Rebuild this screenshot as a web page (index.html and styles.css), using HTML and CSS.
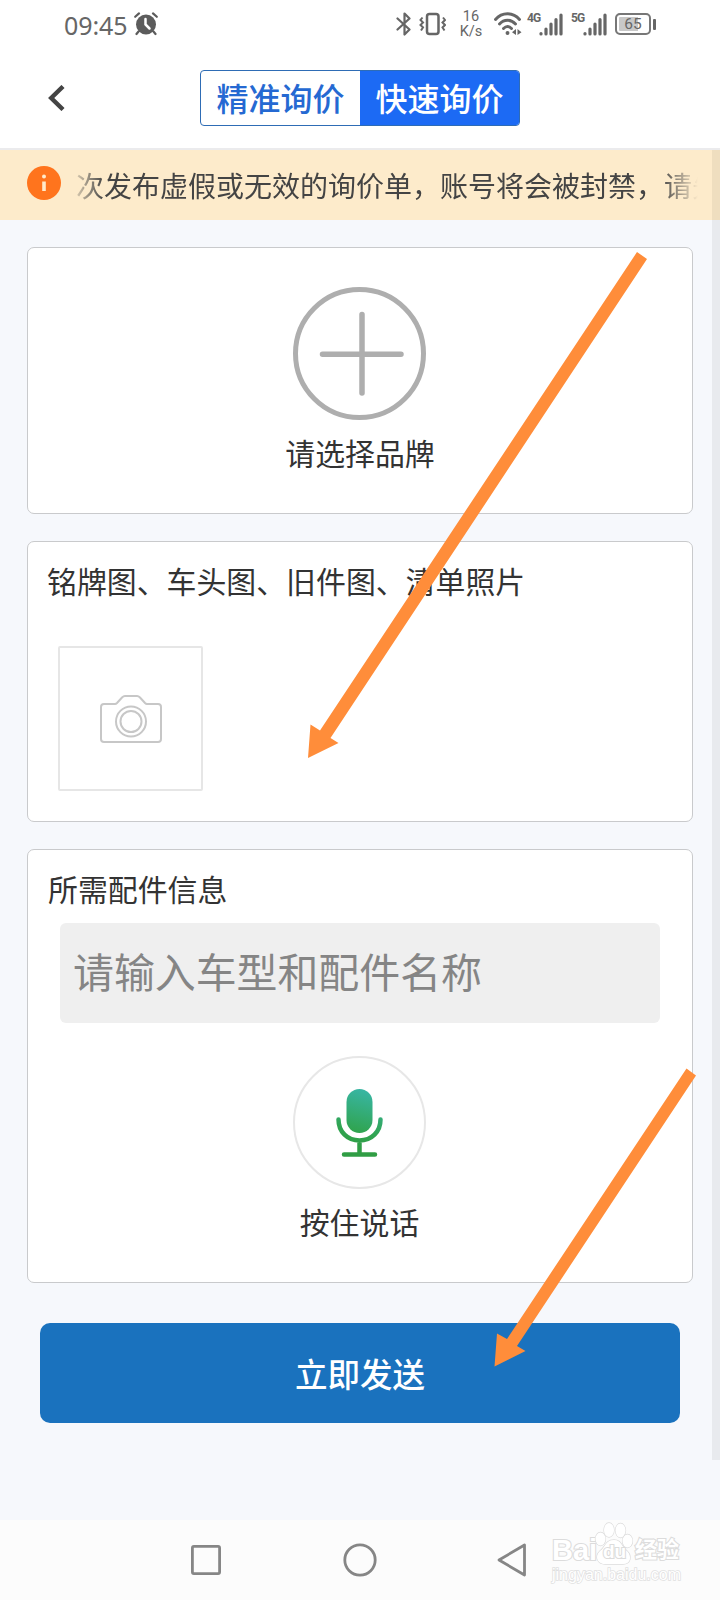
FILE: index.html
```html
<!DOCTYPE html>
<html lang="zh-CN">
<head>
<meta charset="utf-8">
<title>快速询价</title>
<link rel="stylesheet" href="styles.css">
</head>
<body>
<div class="screen">
  <header class="status">
    <span class="clock">09:45</span>
    <svg class="alarm" width="24" height="24" viewBox="0 0 24 24">
      <circle cx="12" cy="12.5" r="10" fill="#5c5c5c"/>
      <path d="M1.2 4.8 5 1.4M22.8 4.8 19 1.4M4.5 19.5 2.5 22M19.5 19.5 21.5 22" stroke="#5c5c5c" stroke-width="2.2" stroke-linecap="round"/>
      <path d="M11.500 7V12.500L15.500 16.500" fill="none" stroke="#fff" stroke-width="2.500" stroke-linecap="round"/>
    </svg>
    <svg class="bluetooth" width="16" height="24" viewBox="0 0 16 24" fill="none" stroke="#666" stroke-width="2.200" stroke-linejoin="round" stroke-linecap="round">
      <path d="M1.5 6.5 13.500 17.500 8.500 22.500V1.5L13.500 6.500 1.5 17.5"/>
    </svg>
    <svg class="vibrate" width="27" height="24" viewBox="0 0 27 24" fill="none" stroke="#666">
      <rect x="8" y="2" width="11.5" height="20" rx="2.500" stroke-width="2.500"/>
      <path d="M3.5 5.500 1.500 8 4 10.5 1.500 13 4 15.5 2 18.500M24 5.500 26 8 23.500 10.5 26 13 23.500 15.5 25.5 18.500" stroke-width="2"/>
    </svg>
    <span class="speed"><span>16</span><span>K/s</span></span>
    <svg class="wifi" width="28" height="24" viewBox="0 0 28 24" fill="none" stroke="#666" stroke-width="2.9" stroke-linecap="round">
      <path d="M1.5 7.5C8-.2 19-.2 25.5 7.5M5.5 12C10 7 17 7 21.5 12M9.5 16.5C12 14 15 14 17.5 16.5"/>
      <circle cx="13.5" cy="21" r="1.200" fill="#666" stroke-width="1.500"/>
      <path d="M22 17V23L18 20.200ZM23.5 17V23L27.500 20.200Z" fill="#666" stroke="none"/>
    </svg>
    <span class="net">4G</span>
    <svg class="bars" width="24" height="24" viewBox="0 0 24 24" stroke="#666" stroke-width="3.200" stroke-linecap="round">
      <path d="M2 21.500V22M7 17V22M12 12V22M17 7.5V22M22 3V22"/>
    </svg>
    <span class="net net-five">5G</span>
    <svg class="bars" width="24" height="24" viewBox="0 0 24 24" stroke="#666" stroke-width="3.200" stroke-linecap="round">
      <path d="M2 21.500V22M7 17V22M12 12V22M17 7.5V22M22 3V22"/>
    </svg>
    <span class="battery">65</span><span class="battery-cap"></span>
  </header>

  <nav class="topbar">
    <svg class="back" width="17" height="26" viewBox="0 0 17 26" fill="none" stroke="#444" stroke-width="4.400">
      <path d="M15 1.5 3.200 13 15 24.5"/>
    </svg>
    <div class="tabs">
      <span class="tab">精准询价</span>
      <span class="tab tab-active">快速询价</span>
    </div>
  </nav>

  <main class="page">
    <div class="notice">
      <svg class="info" width="34" height="34" viewBox="0 0 34 34">
        <circle cx="17" cy="17" r="17" fill="#ff741d"/>
        <path d="M17 15.5V25" stroke="#ffeacb" stroke-width="3.6"/>
        <circle cx="17" cy="10.5" r="2" fill="#ffeacb"/>
      </svg>
      <div class="notice-text">次发布虚假或无效的询价单，账号将会被封禁，请先</div>
    </div>

    <section class="card brand">
      <svg width="134" height="134" viewBox="0 0 134 134" fill="none" stroke="#aeaeae" stroke-width="5">
        <circle cx="66.500" cy="66.500" r="64"/>
        <path d="M69 27.500V106M29.500 67.300H108" stroke-width="5.5" stroke-linecap="round"/>
      </svg>
      <span class="label">请选择品牌</span>
    </section>

    <section class="card photos">
      <span class="label">铭牌图、车头图、旧件图、清单照片</span>
      <div class="upload">
        <svg width="62" height="48" viewBox="0 0 62 48" fill="none" stroke="#c7c7c7" stroke-width="2">
          <path d="M4 9H15Q16 9 17 8L22 2.5Q23.5 1 25 1H37Q38.5 1 40 2.5L45 8Q46 9 47 9H58Q61 9 61 12V44Q61 47 58 47H4Q1 47 1 44V12Q1 9 4 9Z"/>
          <circle cx="31" cy="26.5" r="15"/><circle cx="31" cy="26.5" r="10.5"/>
        </svg>
      </div>
    </section>

    <section class="card parts">
      <span class="label">所需配件信息</span>
      <div class="field">请输入车型和配件名称</div>
      <div class="mic">
        <svg width="48" height="70" viewBox="0 0 48 70">
          <defs>
            <linearGradient id="mic-green" gradientUnits="userSpaceOnUse" x1="32" y1="4" x2="18" y2="60">
              <stop offset="0" stop-color="#38b5a1"/><stop offset=".7" stop-color="#30a451"/><stop offset="1" stop-color="#309d44"/>
            </linearGradient>
          </defs>
          <rect x="10.500" y="1" width="26" height="44" rx="13" fill="url(#mic-green)"/>
          <path d="M2.500 31.500C2.500 44 11.500 52.500 23.500 52.500S44.500 44 44.500 31.500M23.500 53V66M8 66.500H39" fill="none" stroke="url(#mic-green)" stroke-width="4.500" stroke-linecap="round"/>
        </svg>
      </div>
      <span class="label talk">按住说话</span>
    </section>

    <div class="send">立即发送</div>
    <div class="scrollbar"></div>
  </main>

  <footer class="navbar">
    <svg width="30" height="30" viewBox="0 0 30 30" fill="none" stroke="#868686" stroke-width="2.8"><rect x="1.4" y="1.4" width="27.2" height="27.2" rx="1.5"/></svg>
    <svg width="34" height="34" viewBox="0 0 34 34" fill="none" stroke="#868686" stroke-width="2.8"><circle cx="17" cy="17" r="15.2"/></svg>
    <svg width="30" height="34" viewBox="0 0 30 34" fill="none" stroke="#868686" stroke-width="2.8" stroke-linejoin="round"><path d="M27.5 2V32L2 17Z"/></svg>
  </footer>

  <div class="watermark">
    <div class="brandline">
      <span class="bai">Bai</span>
      <span class="paw">
        <svg width="40" height="43" viewBox="0 0 40 43" fill="#fff" stroke="#dcdcdc" stroke-width="1.3">
          <ellipse cx="6.5" cy="17" rx="5" ry="6.5"/><ellipse cx="15" cy="8" rx="5" ry="7"/><ellipse cx="26.5" cy="8.5" rx="5" ry="7"/><ellipse cx="33.5" cy="19" rx="5" ry="6.5"/>
          <path d="M20 18C11 18 12 25 6 29C0 35 4 42 11 42H29C37 42 38 34 33 29C27 25 28 18 20 18Z"/>
        </svg>
        <span class="du">du</span>
      </span>
      <span class="jy">经验</span>
    </div>
    <div class="site">jingyan.baidu.com</div>
  </div>

  <svg class="arrows" width="720" height="1600" viewBox="0 0 720 1600" fill="#ff8d3a">
    <path d="M637 252 647 259 330.500 738 338.500 743 308 758 310.500 724.500 320 730.500Z"/>
    <path d="M686.500 1068.500 696 1075.500 517 1346 525.500 1351 494.500 1366.500 497 1333.500 507 1339Z"/>
  </svg>
</div>
</body>
</html>
```

FILE: styles.css
```css
* { box-sizing: border-box; }
body { margin: 0; font-family: "Noto Sans CJK SC", sans-serif; }
svg { display: block; flex: none; }
.screen { position: relative; width: 720px; height: 1600px; overflow: hidden; background: #fff; display: flex; flex-direction: column; }

.status { height: 48px; flex: none; display: flex; align-items: center; padding-left: 64px; color: #666; font-family: "Noto Sans", sans-serif; }
.clock { width: 70px; font-size: 25px; line-height: 48px; letter-spacing: -.1px; white-space: nowrap; padding-top: 1px; }
.alarm { margin-left: 0; }
.bluetooth { margin-left: 238px; }
.vibrate { margin-left: 7px; }
.speed { margin-left: 12px; width: 26px; display: flex; flex-direction: column; align-items: center; font: 14.500px/15px Roboto, sans-serif; }
.wifi { margin-left: 10px; }
.net { margin-left: 5px; width: 15px; height: 24px; font: bold 12px/12px Roboto, sans-serif; letter-spacing: -1px; }
.bars { margin-left: -3px; }
.net-five { margin-left: 5px; }
.bars + .net { margin-left: 8px; }
.battery { margin-left: 8px; width: 36px; height: 22px; border: 2px solid #777; border-radius: 5px; background: linear-gradient(90deg, #c8c8c8 66%, #fff 66%); box-shadow: inset 0 0 0 2px #fff; font: 15.500px/18px Roboto, sans-serif; text-align: center; }
.battery-cap { margin-left: 2px; width: 3px; height: 11px; border-radius: 1px; background: #666; }

.topbar { height: 102px; flex: none; display: flex; align-items: center; padding-left: 48px; border-bottom: 2px solid #ebebed; }
.tabs { margin-left: 135px; display: flex; height: 56px; width: 320px; border: 1px solid #2e6cb5; border-radius: 4px; overflow: hidden; }
.tab { flex: 1; text-align: center; font-size: 32px; line-height: 52px; font-weight: 500; color: #2569d2; }
.tab-active { background: #1c6af4; color: #fff; }

.page { position: relative; height: 1370px; flex: none; background: #f6f8fc; display: flex; flex-direction: column; }
.notice { height: 70px; flex: none; padding: 0 20px 0 27px; display: flex; align-items: center; background: #fdebcb; color: #444; }
.info { margin-top: -5px; }
.notice-text { margin-left: 15px; width: 624px; overflow: hidden; white-space: nowrap; font-size: 28px; line-height: 44px; mask-image: linear-gradient(90deg, rgba(0,0,0,.2), #000 28px, #000 585px, transparent 622px); }

.card { width: 666px; margin: 0 0 27px 27px; flex: none; display: flex; flex-direction: column; background: #fff; border: 1px solid #c9cacc; border-radius: 7px; }
.label { font-size: 29.900px; line-height: 44px; color: #333; white-space: nowrap; }
.brand { height: 267px; margin-top: 27px; padding-top: 39px; align-items: center; }
.brand .label { margin-top: 9px; }
.photos { height: 281px; padding: 16px 0 0 19px; }
.upload { margin: 44px 0 0 11px; width: 145px; height: 145px; border: 2px solid #e6e6e6; border-radius: 2px; display: grid; place-items: center; }
.parts { height: 434px; padding: 16px 0 0 20px; }
.field { margin: 13px 0 0 12px; width: 600px; height: 100px; border-radius: 6px; background: #efefef; padding-left: 13px; font-size: 40.900px; line-height: 96px; color: #858585; white-space: nowrap; }
.mic { margin: 33px 0 0 245px; width: 133px; height: 133px; border: 2px solid #e7e7e7; border-radius: 50%; display: grid; place-items: center; }
.talk { width: 133px; margin: 10px 0 0 245px; text-align: center; }
.send { margin: 13px 0 0 40px; width: 640px; height: 100px; flex: none; border-radius: 10px; background: #1a72be; color: #fff; font-size: 32.500px; line-height: 99px; font-weight: 500; text-align: center; }
.scrollbar { position: absolute; right: 0; top: 0; width: 8px; height: 1310px; background: rgba(0,0,0,.055); }

.navbar { height: 80px; flex: none; display: flex; align-items: center; padding-left: 191px; gap: 122px; background: #fcfcfc; }
.navbar svg:last-child { margin-left: -2px; }

.watermark { position: absolute; left: 552px; top: 1522px; width: 130px; color: #fff; font-family: "Liberation Sans", "Noto Sans CJK SC", sans-serif; paint-order: stroke fill; }
.brandline { display: flex; align-items: flex-end; height: 43px; font-size: 29px; line-height: 30px; font-weight: bold; -webkit-text-stroke: 2.200px #dcdcdc; }
.bai { width: 43px; }
.paw { position: relative; display: block; width: 40px; height: 43px; margin-left: -1px; }
.du { position: absolute; left: 9px; top: 19px; font-size: 19px; line-height: 22px; }
.jy { font-size: 22px; line-height: 30px; margin-left: 1px; white-space: nowrap; }
.site { font-size: 16px; line-height: 20px; -webkit-text-stroke: 1.500px #e0e0e0; white-space: nowrap; }
.arrows { position: absolute; left: 0; top: 0; pointer-events: none; }
```
